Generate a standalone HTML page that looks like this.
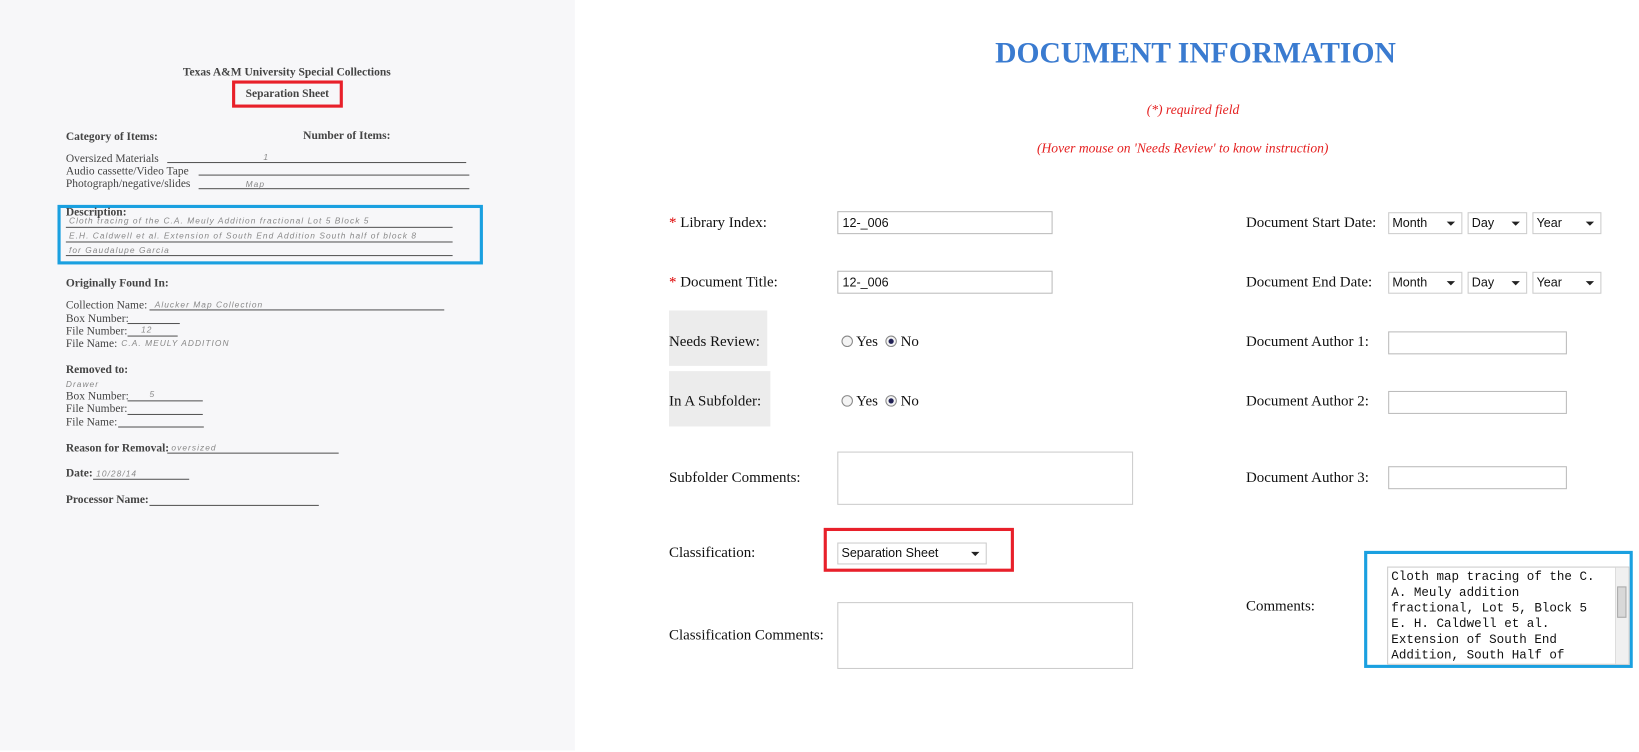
<!DOCTYPE html>
<html><head><meta charset="utf-8"><style>
*{margin:0;padding:0;box-sizing:border-box}
html,body{width:1639px;height:751px;overflow:hidden;background:#fff}
#w{position:absolute;left:0;top:0;width:1568px;height:719px;transform:scale(1.0453);transform-origin:0 0;font-family:"Liberation Serif",serif}
.a{position:absolute;white-space:nowrap}
#left{position:absolute;left:0;top:0;width:550px;height:718px;background:#f7f7f9}
.s{position:absolute;white-space:nowrap;font-size:11px;color:#444;font-family:"Liberation Serif",serif}
.b{font-weight:bold}
.ln{position:absolute;border-bottom:1px solid #555;height:1px}
.hw{position:absolute;font-family:"Liberation Sans",sans-serif;font-style:italic;font-size:8px;color:#888;white-space:nowrap;letter-spacing:1px}
.lab{position:absolute;font-size:14.3px;color:#111;white-space:nowrap}
.inp{position:absolute;border:1px solid #bbb;background:#fff;font-family:"Liberation Sans",sans-serif;font-size:12px;padding:3px 4px;color:#111}
.sel{position:absolute;border:1px solid #ccc;background:#fff;font-family:"Liberation Sans",sans-serif;font-size:12px;padding:2px 3px;color:#111;height:21px}
.sel:after{content:"";position:absolute;right:6px;top:8px;border-left:4px solid transparent;border-right:4px solid transparent;border-top:4px solid #222}
.ta{position:absolute;border:1px solid #ccc;background:#fff}
.rad{display:inline-block;width:11px;height:11px;border:1px solid #888;border-radius:50%;vertical-align:-1px;background:#f4f4f4;position:relative}
.rad.on:after{content:"";position:absolute;left:2px;top:2px;width:5px;height:5px;border-radius:50%;background:#225}
</style></head><body><div id="w">
<div id="left">
<div class="s b" style="left:175px;top:63px;font-size:11px">Texas A&amp;M University Special Collections</div>
<div class="a" style="left:222px;top:77px;width:106px;height:26px;border:3px solid #e8202a"></div>
<div class="s b" style="left:235px;top:84px">Separation Sheet</div>
<div class="s b" style="left:63px;top:125px">Category of Items:</div>
<div class="s b" style="left:290px;top:124px">Number of Items:</div>
<div class="s" style="left:63px;top:146px">Oversized Materials</div><div class="ln" style="left:160px;top:155px;width:286px"></div>
<div class="hw" style="left:252px;top:146px">1</div>
<div class="s" style="left:63px;top:158px">Audio cassette/Video Tape</div><div class="ln" style="left:190px;top:167px;width:259px"></div>
<div class="s" style="left:63px;top:170px">Photograph/negative/slides</div><div class="ln" style="left:190px;top:180px;width:259px"></div>
<div class="hw" style="left:235px;top:172px">Map</div>
<div class="a" style="left:55px;top:196px;width:407px;height:57px;border:3px solid #1aa0e0"></div>
<div class="s b" style="left:63px;top:197px">Description:</div>
<div class="hw" style="left:66px;top:207px">Cloth tracing of the C.A. Meuly Addition fractional Lot 5 Block 5</div><div class="ln" style="left:63px;top:217px;width:370px"></div>
<div class="hw" style="left:66px;top:221px">E.H. Caldwell et al. Extension of South End Addition South half of block 8</div><div class="ln" style="left:63px;top:231px;width:370px"></div>
<div class="hw" style="left:66px;top:235px">for Gaudalupe Garcia</div><div class="ln" style="left:63px;top:244px;width:370px"></div>
<div class="s b" style="left:63px;top:265px">Originally Found In:</div>
<div class="s" style="left:63px;top:286px">Collection Name:</div><div class="ln" style="left:143px;top:296px;width:282px"></div><div class="hw" style="left:148px;top:287px">Alucker Map Collection</div>
<div class="s" style="left:63px;top:299px">Box Number:</div><div class="ln" style="left:122px;top:309px;width:50px"></div>
<div class="s" style="left:63px;top:311px">File Number:</div><div class="ln" style="left:122px;top:321px;width:48px"></div><div class="hw" style="left:135px;top:311px">12</div>
<div class="s" style="left:63px;top:323px">File Name:</div><div class="hw" style="left:116px;top:324px">C.A. MEULY ADDITION</div>
<div class="s b" style="left:63px;top:348px">Removed to:</div>
<div class="hw" style="left:63px;top:363px">Drawer</div>
<div class="s" style="left:63px;top:373px">Box Number:</div><div class="ln" style="left:122px;top:383px;width:72px"></div><div class="hw" style="left:143px;top:373px">5</div>
<div class="s" style="left:63px;top:385px">File Number:</div><div class="ln" style="left:122px;top:396px;width:72px"></div>
<div class="s" style="left:63px;top:398px">File Name:</div><div class="ln" style="left:113px;top:408px;width:82px"></div>
<div class="s b" style="left:63px;top:423px">Reason for Removal:</div><div class="ln" style="left:160px;top:433px;width:164px"></div><div class="hw" style="left:164px;top:424px">oversized</div>
<div class="s b" style="left:63px;top:447px">Date:</div><div class="ln" style="left:89px;top:458px;width:92px"></div><div class="hw" style="left:92px;top:449px">10/28/14</div>
<div class="s b" style="left:63px;top:472px">Processor Name:</div><div class="ln" style="left:143px;top:483px;width:162px"></div>
</div>

<div class="a" style="left:952px;top:36px;font-size:28.3px;font-weight:bold;color:#3a7bd0">DOCUMENT INFORMATION</div>
<div class="a" style="left:1097px;top:97px;font-size:13px;font-style:italic;color:#e52020">(*) required field</div>
<div class="a" style="left:992px;top:134px;font-size:13px;font-style:italic;color:#e52020">(Hover mouse on 'Needs Review' to know instruction)</div>

<div class="lab" style="left:640px;top:205px"><span style="color:#d00">*</span> Library Index:</div>
<div class="inp" style="left:801px;top:202px;width:206px;height:22px">12-_006</div>
<div class="lab" style="left:640px;top:262px"><span style="color:#d00">*</span> Document Title:</div>
<div class="inp" style="left:801px;top:259px;width:206px;height:22px">12-_006</div>
<div class="a" style="left:640px;top:297px;width:94px;height:53px;background:#ececec"></div>
<div class="lab" style="left:640px;top:319px">Needs Review:</div>
<div class="lab" style="left:805px;top:319px"><span class="rad"></span> Yes &nbsp;<span class="rad on"></span> No</div>
<div class="a" style="left:640px;top:355px;width:97px;height:53px;background:#ececec"></div>
<div class="lab" style="left:640px;top:376px">In A Subfolder:</div>
<div class="lab" style="left:805px;top:376px"><span class="rad"></span> Yes &nbsp;<span class="rad on"></span> No</div>
<div class="lab" style="left:640px;top:449px">Subfolder Comments:</div>
<div class="ta" style="left:801px;top:432px;width:283px;height:51px"></div>
<div class="lab" style="left:640px;top:521px">Classification:</div>
<div class="a" style="left:788px;top:505px;width:182px;height:42px;border:3px solid #e8202a"></div>
<div class="sel" style="left:801px;top:519px;width:143px">Separation Sheet</div>
<div class="lab" style="left:640px;top:600px">Classification Comments:</div>
<div class="ta" style="left:801px;top:576px;width:283px;height:64px"></div>

<div class="lab" style="left:1192px;top:205px">Document Start Date:</div>
<div class="sel" style="left:1328px;top:203px;width:71px">Month</div>
<div class="sel" style="left:1404px;top:203px;width:57px">Day</div>
<div class="sel" style="left:1466px;top:203px;width:66px">Year</div>
<div class="lab" style="left:1192px;top:262px">Document End Date:</div>
<div class="sel" style="left:1328px;top:260px;width:71px">Month</div>
<div class="sel" style="left:1404px;top:260px;width:57px">Day</div>
<div class="sel" style="left:1466px;top:260px;width:66px">Year</div>
<div class="lab" style="left:1192px;top:319px">Document Author 1:</div>
<div class="inp" style="left:1328px;top:317px;width:171px;height:22px"></div>
<div class="lab" style="left:1192px;top:376px">Document Author 2:</div>
<div class="inp" style="left:1328px;top:374px;width:171px;height:22px"></div>
<div class="lab" style="left:1192px;top:449px">Document Author 3:</div>
<div class="inp" style="left:1328px;top:446px;width:171px;height:22px"></div>
<div class="lab" style="left:1192px;top:572px">Comments:</div>
<div class="a" style="left:1305px;top:527px;width:257px;height:112px;border:3px solid #1aa0e0"></div>
<div class="ta" style="left:1327px;top:542px;width:232px;height:94px;overflow:hidden">
<div style="font-family:'Liberation Mono',monospace;font-size:12px;line-height:15px;color:#111;padding:2px 3px;white-space:pre">Cloth map tracing of the C.
A. Meuly addition
fractional, Lot 5, Block 5
E. H. Caldwell et al.
Extension of South End
Addition, South Half of</div>
<div style="position:absolute;right:0;top:0;width:13px;height:94px;background:#f0f0f0;border-left:1px solid #ddd"></div>
<div style="position:absolute;right:2px;top:18px;width:9px;height:30px;background:#d8d8d8;border:1px solid #aaa"></div>
</div>
</div></body></html>
